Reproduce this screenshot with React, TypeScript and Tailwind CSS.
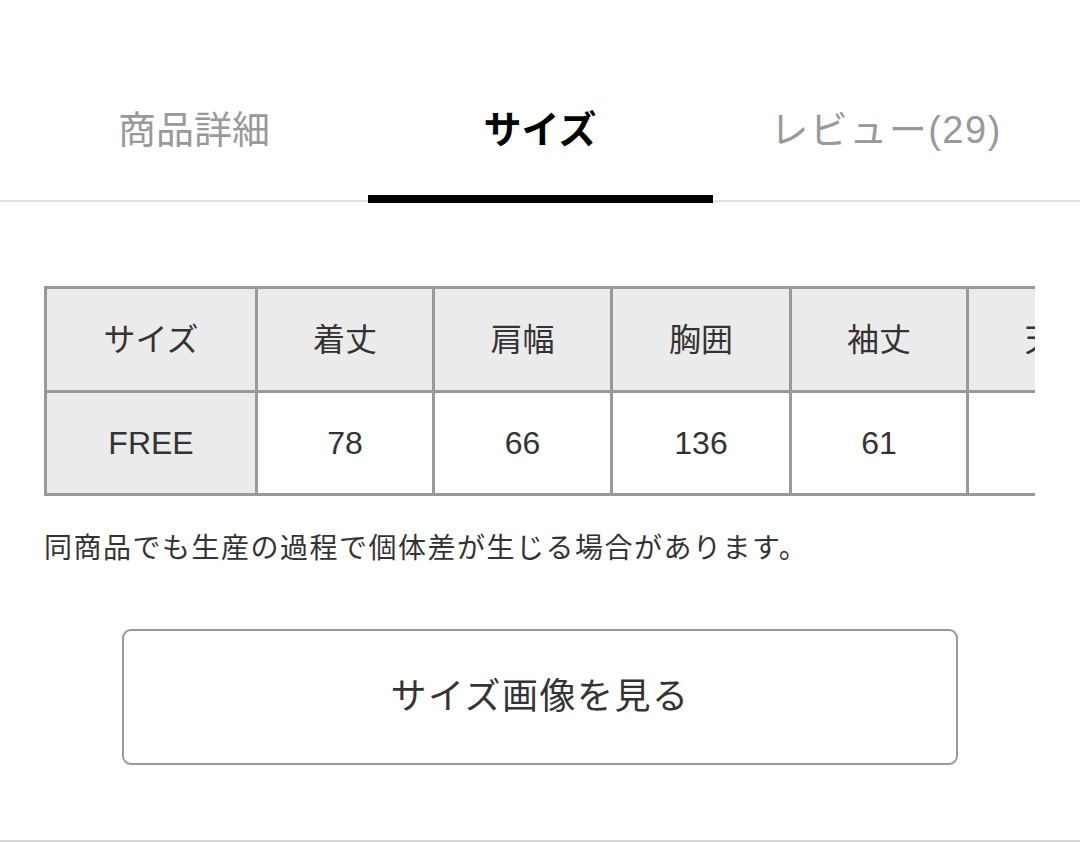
import React from "react";

const font = { fontFamily: '"Liberation Sans", "Noto Sans CJK JP", sans-serif' };

const headers = ["サイズ", "着丈", "肩幅", "胸囲", "袖丈", "天地"];
const values = ["FREE", "78", "66", "136", "61", "23"];

function Tabs() {
  const tabs = ["商品詳細", "サイズ", "レビュー(29)"];
  return (
    <div>
      <div className="flex px-[21px]">
        {tabs.map((t, i) => (
          <div key={t} className="flex-1 flex flex-col items-center">
            <div
              className={
                "pt-[106px] leading-[48px] text-[38px] " +
                (i === 1 ? "text-black font-bold" : "text-[#999999]") +
                (i === 2 ? " tracking-[1.5px]" : "")
              }
            >
              {t}
            </div>
            <div className={"relative z-10 mt-[41px] h-[8px] w-[345px] " + (i === 1 ? "bg-black" : "bg-transparent")} />
          </div>
        ))}
      </div>
      <div className="-mt-[3px] h-[2px] bg-[#e2e2e2]" />
    </div>
  );
}

function SizeTable() {
  return (
    <div className="ml-[44px] mt-[84px] w-[991px] overflow-hidden">
      <table className="border-collapse text-[32px] text-[#333333] table-fixed w-[1100px]">
        <colgroup>
          <col className="w-[211px]" />
          <col className="w-[177px]" />
          <col className="w-[178px]" />
          <col className="w-[179px]" />
          <col className="w-[177px]" />
          <col className="w-[178px]" />
        </colgroup>
        <tbody>
          <tr className="h-[104px] bg-[#ebebeb]">
            {headers.map((h) => (
              <td key={h} className="border-[3px] border-[#999999] text-center">{h}</td>
            ))}
          </tr>
          <tr className="h-[103px]">
            {values.map((v, i) => (
              <td key={i} className={"border-[3px] border-[#999999] text-center " + (i === 0 ? "bg-[#ebebeb]" : "bg-white")}>{v}</td>
            ))}
          </tr>
        </tbody>
      </table>
    </div>
  );
}

export default function App() {
  return (
    <div className="w-[1080px] h-[843px] bg-white overflow-hidden flex flex-col" style={font}>
      <Tabs />
      <SizeTable />
      <p className="ml-[44px] mt-[33px] text-[28px] leading-[40px] tracking-[1.5px] text-[#333333]">
        同商品でも生産の過程で個体差が生じる場合があります。
      </p>
      <button className="mx-[122px] mt-[60px] h-[136px] rounded-[9px] border-2 border-[#999999] bg-white text-[36px] tracking-[1.5px] text-[#333333]">
        サイズ画像を見る
      </button>
      <div className="mt-auto mb-[1px] h-[2px] bg-[#d5d5d5]" />
    </div>
  );
}
